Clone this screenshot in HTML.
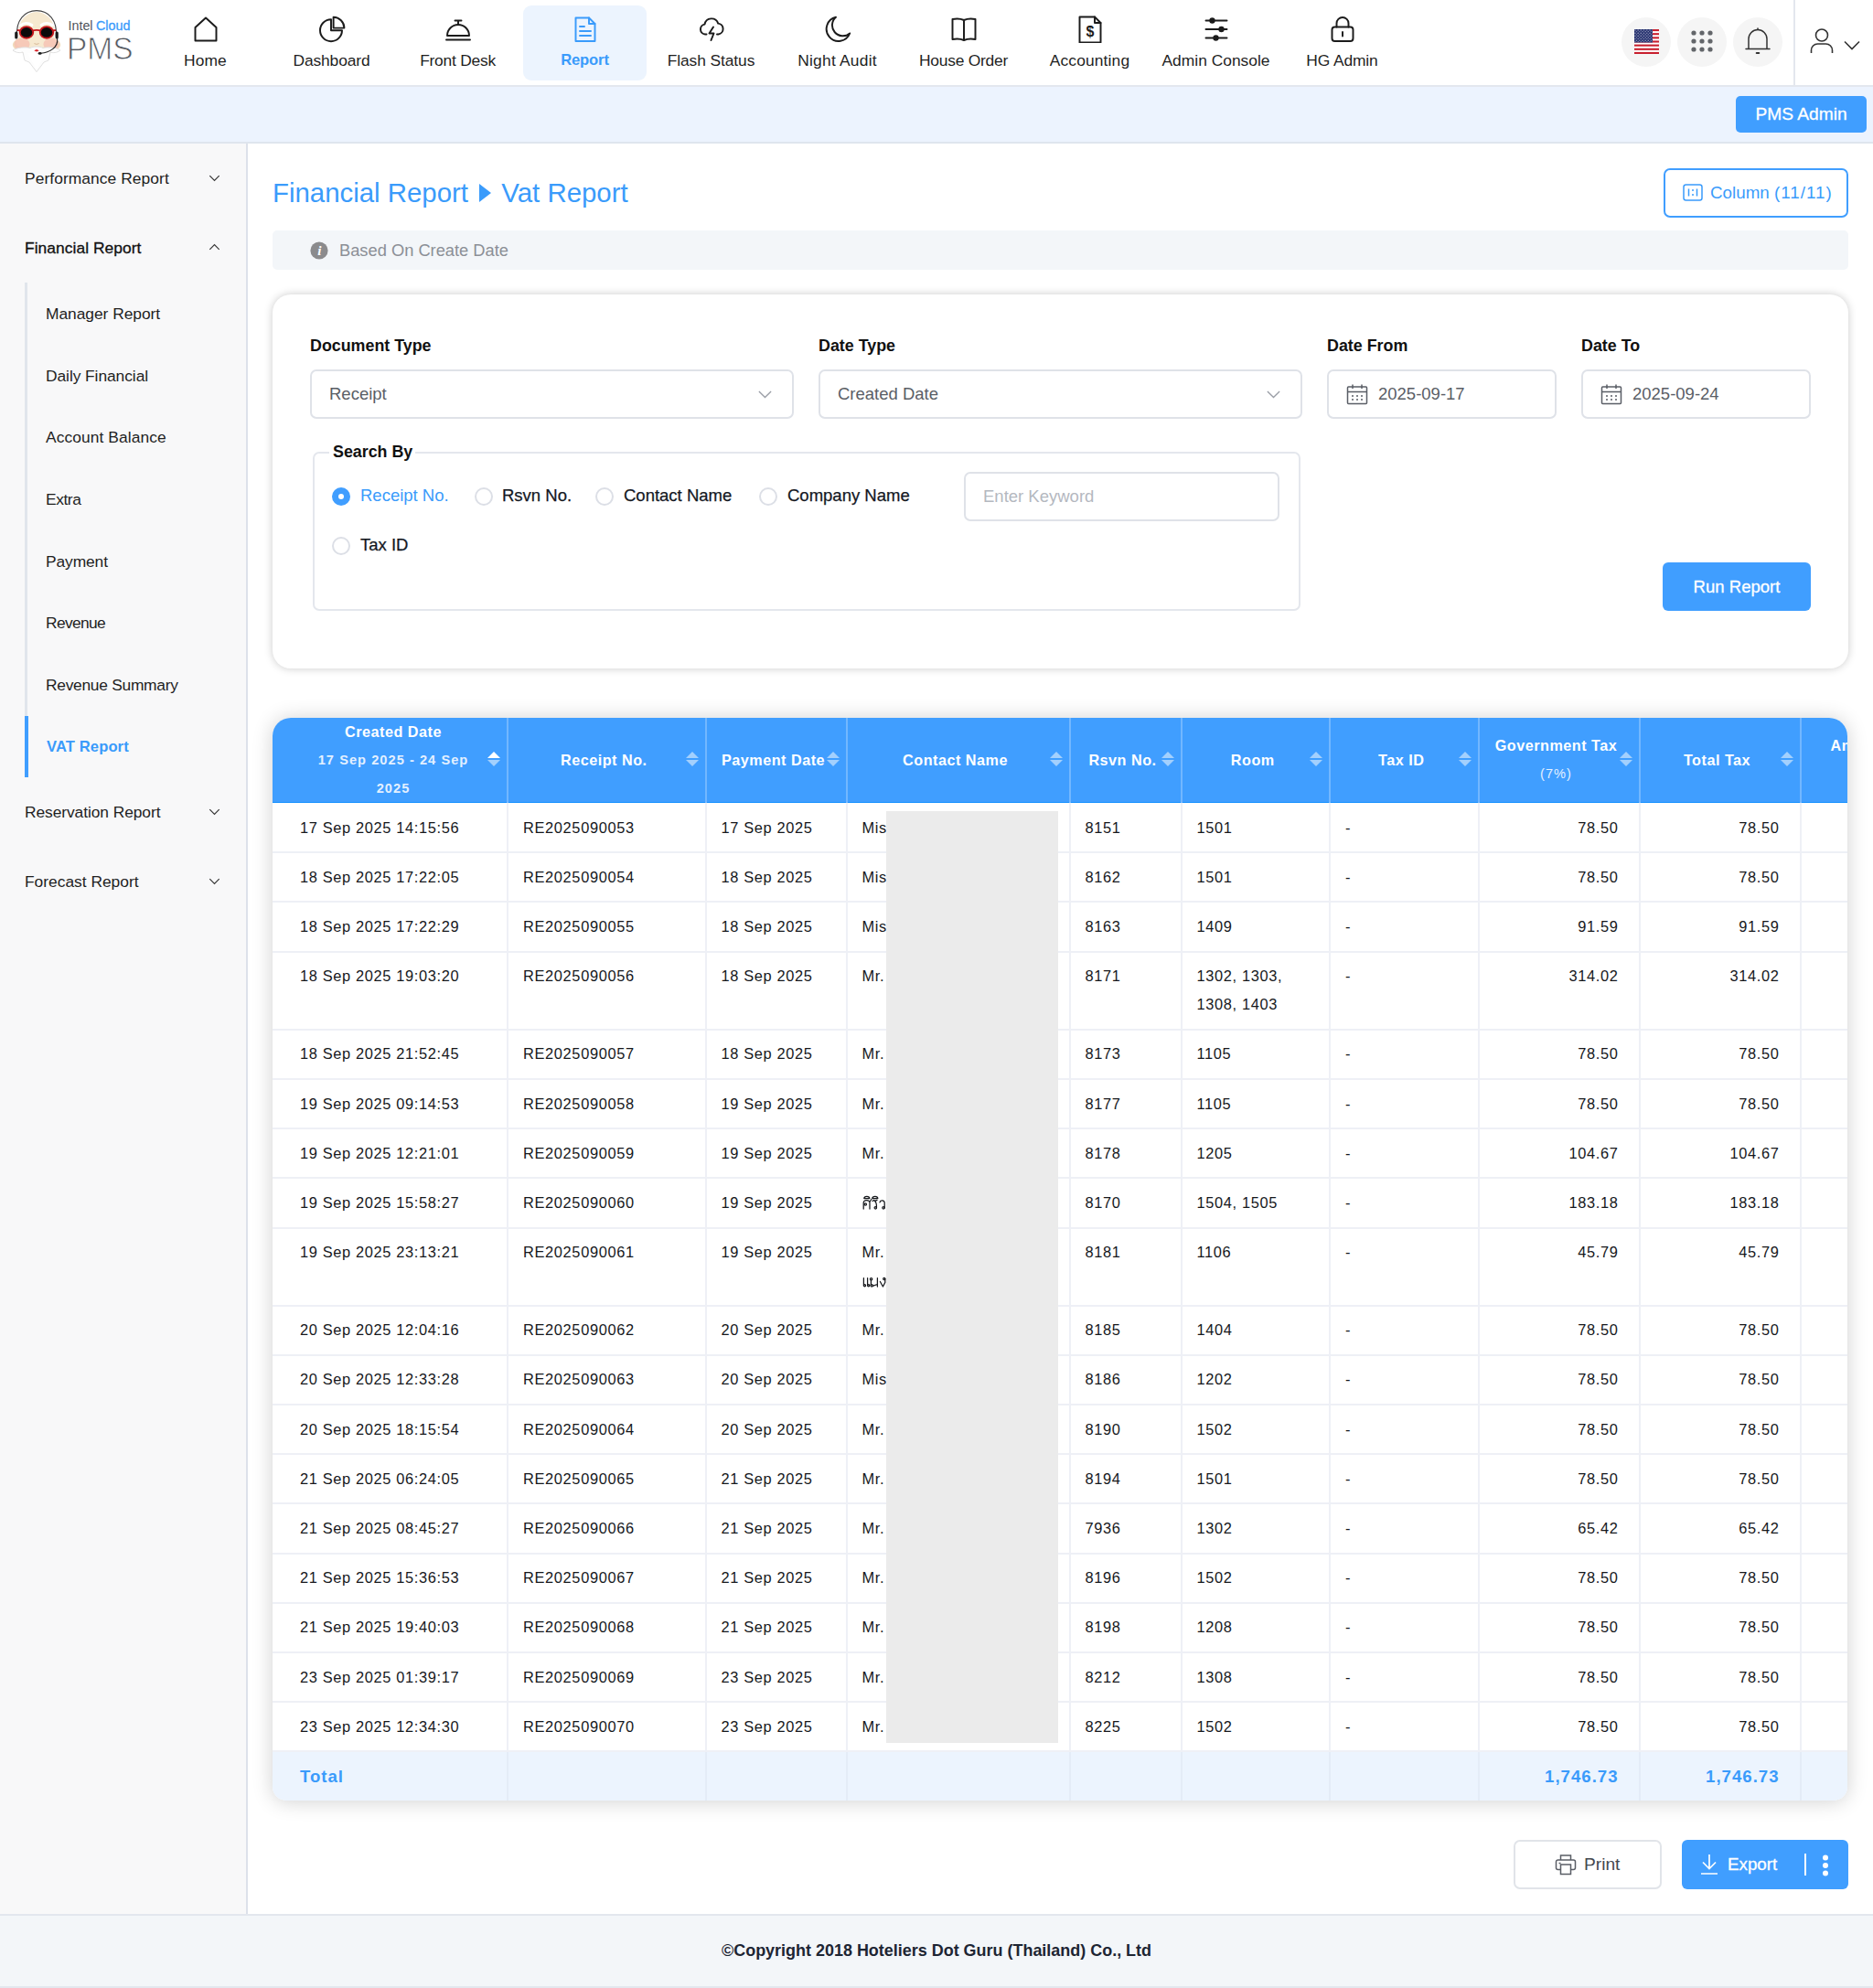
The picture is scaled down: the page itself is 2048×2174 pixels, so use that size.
<!DOCTYPE html>
<html><head><meta charset="utf-8"><title>Vat Report</title>
<style>
*{box-sizing:border-box}
html,body{margin:0;padding:0}
body{width:2048px;height:2174px;position:relative;overflow:hidden;background:#fff;font-family:"Liberation Sans",sans-serif;color:#1f2329}
.abs{position:absolute}
/* NAV */
#nav{position:absolute;left:0;top:0;width:2048px;height:95px;background:#fff;border-bottom:2px solid #e3e7ee}
.ni{position:absolute;top:6px;width:135px;height:82px;border-radius:9px;text-align:center}
.ni svg{position:absolute;left:50%;top:11px;margin-left:-15px;width:30px;height:30px;fill:none;stroke:#1b1b1b;stroke-width:1.95;stroke-linejoin:round;stroke-linecap:round}
.ni span{position:absolute;left:-20px;right:-20px;top:48px;font-size:17.4px;line-height:24px;color:#1f1f1f;white-space:nowrap}
.ni.on{background:#ecf4fe}
.ni.on svg{stroke:#3a9bfb}
.ni.on span{color:#3a9bfb;font-weight:bold;font-size:16.6px}
.circ{position:absolute;top:18.5px;width:54px;height:54px;border-radius:50%;background:#f5f5f5}
/* BAR */
#bar{position:absolute;left:0;top:95px;width:2048px;height:62px;background:#ecf3fe;border-bottom:2px solid #dfe5ee}
#pmsadmin{position:absolute;left:1898px;top:10px;width:143px;height:40px;border-radius:5px;background:#409eff;color:#fff;font-size:19.2px;line-height:40px;text-align:center;-webkit-text-stroke:.3px #fff}
/* SIDE */
#side{position:absolute;left:0;top:157px;width:271px;height:1936px;background:#f8f8f9;border-right:2px solid #dde1ea}
.m1{position:absolute;left:27px;font-size:17.4px;line-height:24px;color:#1f1f1f;white-space:nowrap}
.m2{position:absolute;left:50px;font-size:17.4px;line-height:24px;color:#1f1f1f;white-space:nowrap}
.chev{position:absolute;left:228px;width:13px;height:8px;fill:none;stroke:#333;stroke-width:1.5}
/* MAIN */
#title{position:absolute;left:298px;top:190px;font-size:29.4px;line-height:42px;color:#3a9bfb;white-space:nowrap}
#colbtn{position:absolute;left:1819px;top:184px;width:202px;height:54px;border:2px solid #409eff;border-radius:7px;color:#3a9bfb;font-size:18.8px;line-height:50px;white-space:nowrap}
#info{position:absolute;left:298px;top:252px;width:1723px;height:43px;border-radius:5px;background:#f3f6f9;color:#8b8f96;font-size:18.3px;line-height:43px}
#card{position:absolute;left:298px;top:322px;width:1723px;height:409px;border-radius:20px;background:#fff;box-shadow:0 0 10px rgba(0,0,0,.21)}
.lbl{position:absolute;top:366px;font-size:17.85px;font-weight:bold;line-height:24px;color:#111;white-space:nowrap}
.inp{position:absolute;top:404px;height:54px;border:2px solid #dfe2e8;border-radius:7px;background:#fff;font-size:18.5px;line-height:50px;color:#5a5e66;white-space:nowrap}
.rad{position:absolute;width:20px;height:20px;border-radius:50%;border:2px solid #dcdfe6;background:#fff}
.rad.on{border:none;background:#409eff}
.rad.on:after{content:"";position:absolute;left:7px;top:7px;width:6px;height:6px;border-radius:50%;background:#fff}
.rl{position:absolute;font-size:18.5px;line-height:24px;color:#14181f;white-space:nowrap;-webkit-text-stroke:.25px #14181f}
/* TABLE */
#tw{position:absolute;left:298px;top:785px;width:1722px;height:1184px;border-radius:20px 20px 15px 15px;overflow:hidden;box-shadow:0 1px 22px rgba(0,0,0,.19);background:#fff}
#tw2{position:absolute;left:298px;top:785px;width:1722px;height:1184px;border-radius:20px 20px 15px 15px;overflow:hidden}
table{border-collapse:collapse;table-layout:fixed;width:1800px;position:absolute;left:0;top:0}
th{background:#409eff;color:#fff;font-size:16.2px;letter-spacing:.5px;font-weight:bold;line-height:31px;padding:0 16px 0 10px;height:93px;border-right:2px solid #72b7ff;box-shadow:inset 0 -1px 0 #1590ff;text-align:center;position:relative;vertical-align:middle}
th .sub{color:#e3f0ff;font-size:14.6px;letter-spacing:1.05px}
tr.first td{padding-top:11.6px}
th>div{position:relative;top:-.5px}
th:first-child{padding-left:24px}
td{font-size:16.4px;letter-spacing:.65px;line-height:31px;padding:10.6px 17px 10.6px 16px;border-right:2px solid #eef0f6;border-bottom:2px solid #eef0f6;vertical-align:top;color:#16181c;white-space:nowrap}
td:first-child{padding-left:30px}
td.r{text-align:right;padding-right:22px}
tr.tot td{background:#ecf4fe;color:#3a9bfb;font-weight:bold;font-size:18.6px;letter-spacing:1px;border-bottom:none;border-right-color:#e4ecf7}
.so{position:absolute;right:7px;top:50%;margin-top:-11px;width:14px;height:20px}
.so i{position:absolute;left:0;width:0;height:0;border-left:7px solid transparent;border-right:7px solid transparent}
.so i.u{top:1px;border-bottom:7.5px solid #a3d0fd}
.so i.d{top:10.5px;border-top:7.5px solid #a3d0fd}
.so.asc i.u{border-bottom-color:#fff}
#mask{position:absolute;left:969px;top:887px;width:188px;height:1019px;background:#ebebeb}
/* FOOT */
#foot{position:absolute;left:0;top:2093px;width:2048px;height:81px;background:#f3f6f9;border-top:2px solid #e3e7ee;border-bottom:2px solid #e3e7ee;text-align:center;font-size:17.97px;font-weight:bold;color:#1d2533;line-height:76px}
#print{position:absolute;left:1655px;top:2012px;width:162px;height:54px;border:2px solid #e1e4e9;border-radius:7px;background:#fff;color:#44484f;font-size:19.2px;line-height:50px}
#export{position:absolute;left:1839px;top:2012px;width:182px;height:54px;border-radius:6px;background:#409eff;color:#fff;font-size:18.8px;line-height:54px}
</style></head>
<body>
<!--NAV-->
<div id="nav">
<svg class="abs" style="left:0;top:0" width="80" height="92" viewBox="0 0 80 92">
 <path d="M18.6 40 C17 22 27 11.6 40 11.6 C53 11.6 63 22 61.4 40" fill="none" stroke="#444" stroke-width="1.1"/>
 <ellipse cx="40" cy="34.5" rx="19.6" ry="21.5" fill="#f6e9d0"/>
 <ellipse cx="40" cy="49" rx="26.2" ry="10.5" fill="#f1dcbc"/>
 <ellipse cx="40" cy="46" rx="22" ry="11" fill="#f6e9d0"/>
 <ellipse cx="24" cy="48.5" rx="8.5" ry="7" fill="#f5bdb0" opacity=".75"/><ellipse cx="56" cy="48.5" rx="8.5" ry="7" fill="#f5bdb0" opacity=".75"/>
 <path d="M14 55 C18 58 22 58 25 57 L27 66 L32 68 L40 78.6 L48 68 L53 66 L55 57 C58 58 62 58 66 55 C62 52 52 51 47 52.5 C44 50.5 36 50.5 33 52.5 C28 51 18 52 14 55Z" fill="#fdfdfd" stroke="#dcdcdc" stroke-width=".9"/>
 <path d="M30 58 L40 76 L50 58Z" fill="#fff"/>
 <path d="M22.5 27.6 C26 24.6 31 24.6 35 27.4" stroke="#fff" stroke-width="2.8" fill="none" stroke-linecap="round"/><path d="M45 27.4 C49 24.6 54 24.6 57.5 27.6" stroke="#fff" stroke-width="2.8" fill="none" stroke-linecap="round"/>
 <rect x="16.2" y="34.5" width="3.2" height="8" rx="1.6" fill="#1a1a1a"/><rect x="60.6" y="34.5" width="3.2" height="8" rx="1.6" fill="#1a1a1a"/>
 <path d="M19 33 L23 33.6 M61 33 L57 33.6 M35 34 Q40 31.6 45 34" stroke="#c4161c" stroke-width="1.8" fill="none"/>
 <ellipse cx="29" cy="35.4" rx="7.2" ry="6.3" fill="#0b0b0b" stroke="#c4161c" stroke-width="1.9"/>
 <ellipse cx="51" cy="35.4" rx="7.2" ry="6.3" fill="#0b0b0b" stroke="#c4161c" stroke-width="1.9"/>
 <path d="M37.4 47.6 q2.6 1.6 5.2 0" stroke="#d8b998" stroke-width="1" fill="none"/>
 <path d="M37.4 55.6 q2.6 -3 5.2 0 q-2.6 1.6 -5.2 0z" fill="#d9242b"/>
 <path d="M62.6 42 C64 52 54 57.6 44.5 58.2" fill="none" stroke="#222" stroke-width="1.1"/><ellipse cx="43.6" cy="58.4" rx="2" ry="1.4" fill="#1a1a1a"/>
</svg>
<div class="abs" style="left:74.5px;top:18.5px;font-size:14.3px;line-height:18px;color:#50555c;white-space:nowrap">Intel<span style="color:#3a9bfb;-webkit-text-stroke:.3px #3a9bfb;margin-left:3.5px">Cloud</span></div>
<div class="abs" style="left:73px;top:33.5px;font-size:35.4px;line-height:38px;color:#54585f;white-space:nowrap;-webkit-text-stroke:.9px #fff;transform:scaleX(.945);transform-origin:0 0">PMS</div>

<div class="ni" style="left:157px"><svg viewBox="0 0 30 30"><path d="M3.5 13 L15 2.5 L26.5 13 V27.5 H3.5Z"/></svg><span style="letter-spacing:0.10px">Home</span></div>
<div class="ni" style="left:295px"><svg viewBox="0 0 30 30"><path d="M14 4.2 A12 12 0 1 0 26 16.2 H14Z"/><path d="M16.6 1.8 A12 12 0 0 1 28.4 13.6 H16.6Z"/></svg><span style="letter-spacing:-0.12px">Dashboard</span></div>
<div class="ni" style="left:433px"><svg viewBox="0 0 30 30"><path d="M3 22 A12 12 0 0 1 27 22Z"/><path d="M2 26.5 H28M15 10 V6M11.5 5.5 H18.5"/></svg><span style="letter-spacing:-0.23px">Front Desk</span></div>
<div class="ni on" style="left:572px"><svg viewBox="0 0 30 30"><path d="M4.5 2.5 H19 L25.5 9 V28 H4.5Z"/><path d="M19 2.5 V9 H25.5M9 12 H14M9 17 H21M9 22 H21"/></svg><span style="letter-spacing:-0.15px">Report</span></div>
<div class="ni" style="left:710px"><svg viewBox="0 0 30 30"><path d="M9.5 20.5 H8 A5.5 5.5 0 0 1 7.5 9.6 A7.6 7.6 0 0 1 22.2 8.6 A6 6 0 0 1 22.5 20.5 H21"/><path d="M17 12.5 L12.5 19.5 H17.5 L14.5 27"/></svg><span style="letter-spacing:-0.09px">Flash Status</span></div>
<div class="ni" style="left:848px"><svg viewBox="0 0 30 30"><path d="M13 1.8 A13.2 13.2 0 1 0 28.2 19.5 A11.3 11.3 0 0 1 13 1.8Z"/></svg><span style="letter-spacing:0.22px">Night Audit</span></div>
<div class="ni" style="left:986px"><svg viewBox="0 0 30 30"><path d="M15 5 C11 3.2 7 3.2 2.5 4 V26 C7 25.2 11 25.2 15 27 C19 25.2 23 25.2 27.5 26 V4 C23 3.2 19 3.2 15 5ZM15 5 V27"/></svg><span style="letter-spacing:-0.21px">House Order</span></div>
<div class="ni" style="left:1124px"><svg viewBox="0 0 30 30"><path d="M3.5 1.5 H20 L26.5 8 V29.5 H3.5Z"/><path d="M20 1.5 V8 H26.5"/><text x="15" y="23" text-anchor="middle" font-family="Liberation Sans" font-weight="bold" font-size="16" fill="#1b1b1b" stroke="none">$</text></svg><span style="letter-spacing:0.15px">Accounting</span></div>
<div class="ni" style="left:1262px"><svg viewBox="0 0 30 30"><path d="M3.5 5.5 H26.5M3.5 15 H26.5M3.5 24.5 H26.5"/><circle cx="10.5" cy="5.5" r="2.2" fill="#1b1b1b"/><circle cx="20.5" cy="15" r="2.2" fill="#1b1b1b"/><circle cx="14.5" cy="24.5" r="2.2" fill="#1b1b1b"/></svg><span style="letter-spacing:0.01px">Admin Console</span></div>
<div class="ni" style="left:1400px"><svg viewBox="0 0 30 30"><rect x="3.5" y="12.5" width="23" height="15.5" rx="3"/><path d="M8.5 12.5 V8.5 A6.5 6.5 0 0 1 21.5 8.5 V12.5M15 18 V22.5"/></svg><span style="letter-spacing:-0.11px">HG Admin</span></div>

<div class="circ" style="left:1773px"><svg class="abs" style="left:14px;top:13.5px" width="27" height="27" viewBox="0 0 27 27">
<defs><pattern id="st" width="3.2" height="3.2" patternUnits="userSpaceOnUse"><circle cx=".9" cy=".9" r=".55" fill="#fff"/><circle cx="2.5" cy="2.5" r=".55" fill="#fff"/></pattern></defs>
<rect width="27" height="27" fill="#fff"/><g fill="#c8202f"><rect y="0" width="27" height="2.1"/><rect y="4.15" width="27" height="2.1"/><rect y="8.3" width="27" height="2.1"/><rect y="12.45" width="27" height="2.1"/><rect y="16.6" width="27" height="2.1"/><rect y="20.75" width="27" height="2.1"/><rect y="24.9" width="27" height="2.1"/></g><rect width="20" height="14.5" fill="#1f2b6b"/><rect width="20" height="14.5" fill="url(#st)"/></svg></div>
<div class="circ" style="left:1834px"><svg class="abs" style="left:14px;top:13px" width="26" height="26" viewBox="0 0 26 26" fill="#63666a"><circle cx="4" cy="4" r="2.6"/><circle cx="13" cy="4" r="2.6"/><circle cx="22" cy="4" r="2.6"/><circle cx="4" cy="13" r="2.6"/><circle cx="13" cy="13" r="2.6"/><circle cx="22" cy="13" r="2.6"/><circle cx="4" cy="22" r="2.6"/><circle cx="13" cy="22" r="2.6"/><circle cx="22" cy="22" r="2.6"/></svg></div>
<div class="circ" style="left:1895px"><svg class="abs" style="left:12px;top:10px" width="30" height="32" viewBox="0 0 30 32" fill="none" stroke="#333" stroke-width="1.5" stroke-linecap="round"><path d="M5 24 V13.5 A10 10 0 0 1 25 13.5 V24"/><path d="M2 24.5 H28M15 3.5 V2"/><path d="M13.8 29 H16.2" stroke-width="2.2"/></svg></div>
<div class="abs" style="left:1961px;top:0;width:2px;height:94px;background:#e3e7ee"></div>
<svg class="abs" style="left:1978px;top:30px" width="28" height="30" viewBox="0 0 28 30" fill="none" stroke="#333" stroke-width="1.6"><circle cx="14" cy="8.5" r="6.5"/><path d="M2.5 28 V25 A7 7 0 0 1 9.5 18 H18.5 A7 7 0 0 1 25.5 25 V28"/></svg>
<svg class="abs" style="left:2016px;top:44px" width="18" height="11" viewBox="0 0 18 11" fill="none" stroke="#333" stroke-width="1.6"><path d="M1 1.5 L9 9.5 L17 1.5"/></svg>
</div>

<!--BAR-->
<div id="bar"><div id="pmsadmin">PMS Admin</div></div>
<!--SIDE-->
<div id="side">
<div class="m1" style="top:26px;letter-spacing:0.07px">Performance Report</div><svg class="chev" style="top:34px" viewBox="0 0 16 10"><path d="M1.5 1.5 L8 8 L14.5 1.5"/></svg>
<div class="m1" style="top:102px;-webkit-text-stroke:.3px #111;color:#111;letter-spacing:0.05px">Financial Report</div><svg class="chev" style="top:109px" viewBox="0 0 16 10"><path d="M1.5 8.5 L8 2 L14.5 8.5"/></svg>
<div class="abs" style="left:27px;top:152px;width:3px;height:474px;background:#e1e5ec"></div>
<div class="m2" style="top:174px;letter-spacing:-0.04px">Manager Report</div>
<div class="m2" style="top:242px;letter-spacing:-0.07px">Daily Financial</div>
<div class="m2" style="top:309px;letter-spacing:0.08px">Account Balance</div>
<div class="m2" style="top:377px;letter-spacing:-0.42px">Extra</div>
<div class="m2" style="top:445px;letter-spacing:-0.11px">Payment</div>
<div class="m2" style="top:512px;letter-spacing:-0.64px">Revenue</div>
<div class="m2" style="top:580px;letter-spacing:-0.28px">Revenue Summary</div>
<div class="abs" style="left:27px;top:626px;width:4px;height:67px;background:#409eff"></div>
<div class="m2" style="top:648px;left:51px;color:#3a9bfb;font-weight:bold;font-size:16.6px;letter-spacing:0.10px">VAT Report</div>
<div class="m1" style="top:719px;letter-spacing:-0.08px">Reservation Report</div><svg class="chev" style="top:727px" viewBox="0 0 16 10"><path d="M1.5 1.5 L8 8 L14.5 1.5"/></svg>
<div class="m1" style="top:795px;letter-spacing:-0.01px">Forecast Report</div><svg class="chev" style="top:803px" viewBox="0 0 16 10"><path d="M1.5 1.5 L8 8 L14.5 1.5"/></svg>
</div>

<!--MAIN-->
<div id="title">Financial Report <svg width="15" height="22" viewBox="0 0 15 22" style="margin:0 2px 0 3px;vertical-align:-1px"><path d="M1 1 L14 11 L1 21Z" fill="#3a9bfb"/></svg> Vat Report</div>
<div id="colbtn"><svg class="abs" style="left:19px;top:15px" width="22" height="19" viewBox="0 0 22 19" fill="none" stroke="#3a9bfb" stroke-width="1.5"><rect x="1" y="1" width="20" height="17" rx="2.5"/><path d="M6.5 5.5 V13.5M15.5 5.5 V13.5M11 6 V8M11 11 V13"/></svg><span class="abs" style="left:49px;top:0">Column <span style="letter-spacing:1px">(11/11)</span></span></div>
<div id="info"><svg class="abs" style="left:41px;top:12px" width="20" height="20" viewBox="0 0 20 20"><circle cx="10" cy="10" r="9.6" fill="#8b8b8d"/><text x="10.3" y="15.2" text-anchor="middle" font-family="Liberation Serif" font-style="italic" font-weight="bold" font-size="15" fill="#fff">i</text></svg><span class="abs" style="left:73px;top:0;white-space:nowrap">Based On Create Date</span></div>
<div id="card"></div>
<div class="lbl" style="left:339px">Document Type</div>
<div class="lbl" style="left:895px">Date Type</div>
<div class="lbl" style="left:1451px">Date From</div>
<div class="lbl" style="left:1729px">Date To</div>
<div class="inp" style="left:339px;width:529px"><span class="abs" style="left:19px;top:0">Receipt</span><svg class="abs" style="left:488px;top:21px" width="15" height="9" viewBox="0 0 17 10" fill="none" stroke="#9a9ea6" stroke-width="1.5"><path d="M1 1 L8.5 8.5 L16 1"/></svg></div>
<div class="inp" style="left:895px;width:529px"><span class="abs" style="left:19px;top:0">Created Date</span><svg class="abs" style="left:488px;top:21px" width="15" height="9" viewBox="0 0 17 10" fill="none" stroke="#9a9ea6" stroke-width="1.5"><path d="M1 1 L8.5 8.5 L16 1"/></svg></div>
<div class="inp" style="left:1451px;width:251px"><svg class="abs cal" style="left:19px;top:13px" width="24" height="24" viewBox="0 0 24 24" fill="none" stroke="#5a5e66" stroke-width="1.5"><rect x="1.5" y="4" width="21" height="18.5" rx="1"/><path d="M1.5 9.5 H22.5M7 1.5 V6M17 1.5 V6"/><path d="M6 14 H8M11 14 H13M16 14 H18M6 18 H8M11 18 H13M16 18 H18" stroke-width="1.7"/></svg><span class="abs" style="left:54px;top:0">2025-09-17</span></div>
<div class="inp" style="left:1729px;width:251px"><svg class="abs cal" style="left:19px;top:13px" width="24" height="24" viewBox="0 0 24 24" fill="none" stroke="#5a5e66" stroke-width="1.5"><rect x="1.5" y="4" width="21" height="18.5" rx="1"/><path d="M1.5 9.5 H22.5M7 1.5 V6M17 1.5 V6"/><path d="M6 14 H8M11 14 H13M16 14 H18M6 18 H8M11 18 H13M16 18 H18" stroke-width="1.7"/></svg><span class="abs" style="left:54px;top:0">2025-09-24</span></div>
<div class="abs" style="left:342px;top:494px;width:1080px;height:174px;border:2px solid #e4e7ed;border-radius:7px"></div>
<div class="abs" style="left:360px;top:482px;width:94px;height:24px;background:#fff"></div>
<div class="lbl" style="left:364px;top:482px">Search By</div>
<div class="rad on" style="left:363px;top:533px"></div><div class="rl" style="left:394px;top:530px;color:#3a9bfb;-webkit-text-stroke:0">Receipt No.</div>
<div class="rad" style="left:519px;top:533px"></div><div class="rl" style="left:549px;top:530px">Rsvn No.</div>
<div class="rad" style="left:651px;top:533px"></div><div class="rl" style="left:682px;top:530px">Contact Name</div>
<div class="rad" style="left:830px;top:533px"></div><div class="rl" style="left:861px;top:530px">Company Name</div>
<div class="rad" style="left:363px;top:587px"></div><div class="rl" style="left:394px;top:584px">Tax ID</div>
<div class="inp" style="left:1054px;top:516px;width:345px;color:#b4b8bf"><span class="abs" style="left:19px;top:0">Enter Keyword</span></div>
<div class="abs" style="left:1818px;top:615px;width:162px;height:53px;border-radius:6px;background:#409eff;color:#fff;font-size:18.55px;line-height:53px;text-align:center;-webkit-text-stroke:.3px #fff">Run Report</div>
<div id="print"><svg class="abs" style="left:43px;top:13px" width="24" height="24" viewBox="0 0 24 24" fill="none" stroke="#5a5e66" stroke-width="1.5"><path d="M6.5 7 V2 H17.5 V7M6 17.5 H3.5 A2 2 0 0 1 1.5 15.5 V9 A2 2 0 0 1 3.5 7 H20.5 A2 2 0 0 1 22.5 9 V15.5 A2 2 0 0 1 20.5 17.5 H18"/><rect x="6.5" y="12" width="11" height="10.5"/><path d="M4.5 10.5 H6.5"/></svg><span class="abs" style="left:75px;top:0">Print</span></div>
<div id="export"><svg class="abs" style="left:19px;top:15px" width="22" height="24" viewBox="0 0 22 24" fill="none" stroke="#fff" stroke-width="1.7"><path d="M11 1 V16M4 9.5 L11 16.5 L18 9.5M2 22 H20"/></svg><span class="abs" style="left:50px;top:0;-webkit-text-stroke:.3px #fff">Export</span><div class="abs" style="left:134px;top:15px;width:2px;height:24px;background:#fff"></div><svg class="abs" style="left:153px;top:16px" width="8" height="24" viewBox="0 0 8 24" fill="#fff"><circle cx="4" cy="3.5" r="3"/><circle cx="4" cy="12" r="3"/><circle cx="4" cy="20.5" r="3"/></svg></div>
<!--TABLE-->
<div id="tw"></div>
<div id="tw2"><table><colgroup><col style="width:257px"><col style="width:216.5px"><col style="width:154px"><col style="width:244px"><col style="width:122px"><col style="width:162.5px"><col style="width:162.5px"><col style="width:176px"><col style="width:176px"><col style="width:180px"></colgroup>
<tr><th><div>Created Date<div class="sub">17 Sep 2025 - 24 Sep<br>2025</div></div><span class="so asc"><i class="u"></i><i class="d"></i></span></th><th><div>Receipt No.</div><span class="so"><i class="u"></i><i class="d"></i></span></th><th><div>Payment Date</div><span class="so"><i class="u"></i><i class="d"></i></span></th><th><div>Contact Name</div><span class="so"><i class="u"></i><i class="d"></i></span></th><th><div>Rsvn No.</div><span class="so"><i class="u"></i><i class="d"></i></span></th><th><div>Room</div><span class="so"><i class="u"></i><i class="d"></i></span></th><th><div>Tax ID</div><span class="so"><i class="u"></i><i class="d"></i></span></th><th><div>Government Tax<div class="sub" style="font-weight:normal">(7%)</div></div><span class="so"><i class="u"></i><i class="d"></i></span></th><th><div>Total Tax</div><span class="so"><i class="u"></i><i class="d"></i></span></th><th style="text-align:left;padding-left:32px;vertical-align:top;padding-top:15px"><div>Am</div></th></tr>
<tr class="first"><td>17 Sep 2025 14:15:56</td><td>RE2025090053</td><td>17 Sep 2025</td><td>Mis</td><td>8151</td><td>1501</td><td>-</td><td class="r">78.50</td><td class="r">78.50</td><td></td></tr>
<tr><td>18 Sep 2025 17:22:05</td><td>RE2025090054</td><td>18 Sep 2025</td><td>Mis</td><td>8162</td><td>1501</td><td>-</td><td class="r">78.50</td><td class="r">78.50</td><td></td></tr>
<tr><td>18 Sep 2025 17:22:29</td><td>RE2025090055</td><td>18 Sep 2025</td><td>Mis</td><td>8163</td><td>1409</td><td>-</td><td class="r">91.59</td><td class="r">91.59</td><td></td></tr>
<tr><td>18 Sep 2025 19:03:20</td><td>RE2025090056</td><td>18 Sep 2025</td><td>Mr.</td><td>8171</td><td>1302, 1303,<br>1308, 1403</td><td>-</td><td class="r">314.02</td><td class="r">314.02</td><td></td></tr>
<tr><td>18 Sep 2025 21:52:45</td><td>RE2025090057</td><td>18 Sep 2025</td><td>Mr.</td><td>8173</td><td>1105</td><td>-</td><td class="r">78.50</td><td class="r">78.50</td><td></td></tr>
<tr><td>19 Sep 2025 09:14:53</td><td>RE2025090058</td><td>19 Sep 2025</td><td>Mr.</td><td>8177</td><td>1105</td><td>-</td><td class="r">78.50</td><td class="r">78.50</td><td></td></tr>
<tr><td>19 Sep 2025 12:21:01</td><td>RE2025090059</td><td>19 Sep 2025</td><td>Mr.</td><td>8178</td><td>1205</td><td>-</td><td class="r">104.67</td><td class="r">104.67</td><td></td></tr>
<tr><td>19 Sep 2025 15:58:27</td><td>RE2025090060</td><td>19 Sep 2025</td><td style="letter-spacing:0"><svg width="27" height="31" viewBox="0 0 27 31" style="vertical-align:top;display:inline-block" fill="none" stroke="#16181c" stroke-width="1.25" stroke-linecap="round" stroke-linejoin="round"><path d="M1.2 22 V15.5 C1.2 13.2 3 12.6 4.6 12.6 C6.8 12.6 8 13.6 8 15.5 V22M8 14.5 L9.8 11.5"/><circle cx="3.3" cy="17" r="1.2"/><path d="M1.8 10.6 C2 7.6 7.6 7.6 7.8 10.6Z"/><path d="M11.2 13.6 C11.8 12.2 13.4 12.4 13.6 13.4 L16 12.4M13.6 13.4 C15.8 15 15.5 18 15.4 21"/><circle cx="14.3" cy="20.8" r="1.2"/><path d="M10.8 10.6 C11 7.6 16.6 7.6 16.8 10.6Z"/><path d="M19 14.8 C19.6 12.2 24.2 12 24.2 15.5 V21"/><circle cx="23" cy="20.8" r="1.2"/></svg></td><td>8170</td><td>1504, 1505</td><td>-</td><td class="r">183.18</td><td class="r">183.18</td><td></td></tr>
<tr><td>19 Sep 2025 23:13:21</td><td>RE2025090061</td><td>19 Sep 2025</td><td>Mr.<br><svg width="27" height="31" viewBox="0 0 27 31" style="vertical-align:top;display:inline-block" fill="none" stroke="#16181c" stroke-width="1.25" stroke-linecap="round" stroke-linejoin="round"><path d="M1.4 12.6 V20.5M5.6 12.6 V20.5"/><circle cx="2.5" cy="20.8" r="1.1"/><circle cx="6.7" cy="20.8" r="1.1"/><circle cx="9.6" cy="13.8" r="1.2"/><path d="M9.4 15 V19.8M11.2 21.4 L16.2 19.5M16.4 12.6 V22"/><circle cx="10.2" cy="20.8" r="1.2"/><path d="M19.4 16.5 L22.4 22 L24.8 17.5 V13.6"/><circle cx="23.8" cy="13.4" r="1.1"/></svg></td><td>8181</td><td>1106</td><td>-</td><td class="r">45.79</td><td class="r">45.79</td><td></td></tr>
<tr><td>20 Sep 2025 12:04:16</td><td>RE2025090062</td><td>20 Sep 2025</td><td>Mr.</td><td>8185</td><td>1404</td><td>-</td><td class="r">78.50</td><td class="r">78.50</td><td></td></tr>
<tr><td>20 Sep 2025 12:33:28</td><td>RE2025090063</td><td>20 Sep 2025</td><td>Mis</td><td>8186</td><td>1202</td><td>-</td><td class="r">78.50</td><td class="r">78.50</td><td></td></tr>
<tr><td>20 Sep 2025 18:15:54</td><td>RE2025090064</td><td>20 Sep 2025</td><td>Mr.</td><td>8190</td><td>1502</td><td>-</td><td class="r">78.50</td><td class="r">78.50</td><td></td></tr>
<tr><td>21 Sep 2025 06:24:05</td><td>RE2025090065</td><td>21 Sep 2025</td><td>Mr.</td><td>8194</td><td>1501</td><td>-</td><td class="r">78.50</td><td class="r">78.50</td><td></td></tr>
<tr><td>21 Sep 2025 08:45:27</td><td>RE2025090066</td><td>21 Sep 2025</td><td>Mr.</td><td>7936</td><td>1302</td><td>-</td><td class="r">65.42</td><td class="r">65.42</td><td></td></tr>
<tr><td>21 Sep 2025 15:36:53</td><td>RE2025090067</td><td>21 Sep 2025</td><td>Mr.</td><td>8196</td><td>1502</td><td>-</td><td class="r">78.50</td><td class="r">78.50</td><td></td></tr>
<tr><td>21 Sep 2025 19:40:03</td><td>RE2025090068</td><td>21 Sep 2025</td><td>Mr.</td><td>8198</td><td>1208</td><td>-</td><td class="r">78.50</td><td class="r">78.50</td><td></td></tr>
<tr><td>23 Sep 2025 01:39:17</td><td>RE2025090069</td><td>23 Sep 2025</td><td>Mr.</td><td>8212</td><td>1308</td><td>-</td><td class="r">78.50</td><td class="r">78.50</td><td></td></tr>
<tr><td>23 Sep 2025 12:34:30</td><td>RE2025090070</td><td>23 Sep 2025</td><td>Mr.</td><td>8225</td><td>1502</td><td>-</td><td class="r">78.50</td><td class="r">78.50</td><td></td></tr>
<tr class="tot"><td>Total</td><td></td><td></td><td></td><td></td><td></td><td></td><td class="r">1,746.73</td><td class="r">1,746.73</td><td></td></tr>
</table></div>
<div id="mask"></div>
<!--FOOT-->
<div id="foot">©Copyright 2018 Hoteliers Dot Guru (Thailand) Co., Ltd</div>
</body></html>
